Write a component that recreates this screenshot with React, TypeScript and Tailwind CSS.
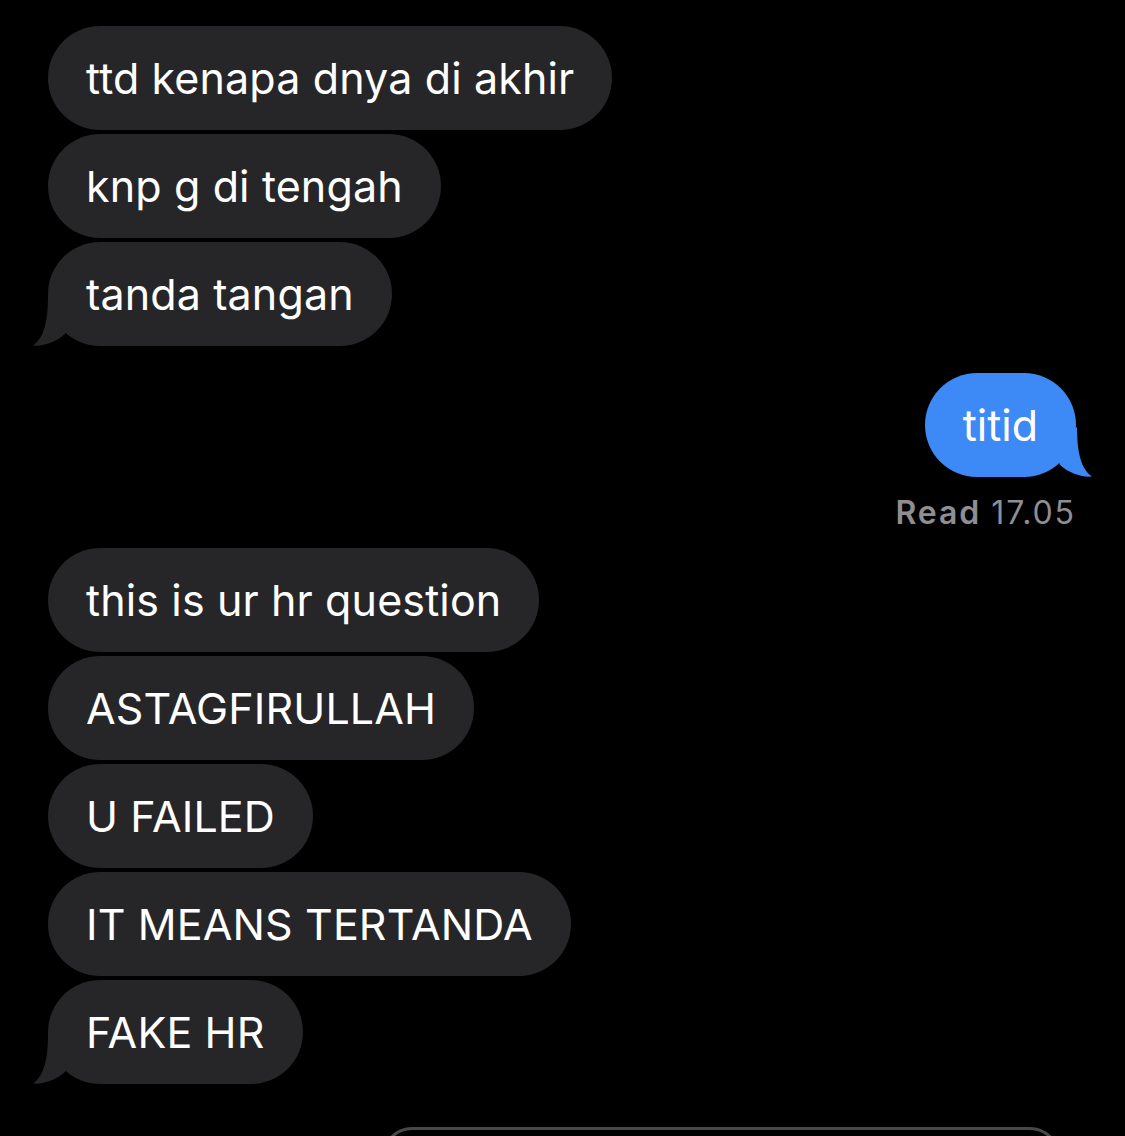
import React from "react";

const GRAY = "#262629";
const BLUE = "#3d89f5";

function LeftTail() {
  return (
    <svg
      className="absolute left-[-16px] bottom-0"
      width="40"
      height="50"
      viewBox="0 0 40 50"
    >
      <path
        d="M16,0 C16,25 12,42 1,49.5 C12,50.5 24,46 33,38 L40,20 Z"
        fill={GRAY}
      />
    </svg>
  );
}

function RightTail() {
  return (
    <svg
      className="absolute right-[-17px] bottom-0"
      width="40"
      height="50"
      viewBox="0 0 40 50"
    >
      <path
        d="M24,0 C24,25 28,42 39,49.5 C28,50.5 16,46 7,38 L0,20 Z"
        fill={BLUE}
      />
    </svg>
  );
}

function Bubble({ text, tail }: { text: string; tail?: boolean }) {
  return (
    <div className="relative rounded-[52px] bg-[#262629] px-[38px] py-[26px] text-[43px] leading-[52px] tracking-[0.003em] text-white">
      {text}
      {tail && <LeftTail />}
    </div>
  );
}

export default function App() {
  const g1 = ["ttd kenapa dnya di akhir", "knp g di tengah", "tanda tangan"];
  const g2 = [
    "this is ur hr question",
    "ASTAGFIRULLAH",
    "U FAILED",
    "IT MEANS TERTANDA",
    "FAKE HR",
  ];
  return (
    <div className="h-[1136px] w-full overflow-hidden bg-black font-['Inter',sans-serif] antialiased">
      <div className="flex flex-col pl-[48px] pr-[49px] pt-[26px]">
        <div className="flex flex-col items-start gap-[4px]">
          {g1.map((t, i) => (
            <Bubble key={t} text={t} tail={i === g1.length - 1} />
          ))}
        </div>
        <div className="mt-[27px] flex justify-end">
          <div className="relative rounded-[52px] bg-[#3d89f5] px-[38px] py-[26px] text-[43px] leading-[52px] text-white">
            titid
            <RightTail />
          </div>
        </div>
        <div className="mt-[16px] flex justify-end text-[32px] leading-[40px] tracking-[0.06em] text-[#8e8e93]">
          <span className="font-semibold">Read</span>
          <span className="ml-[10px]">17.05</span>
        </div>
        <div className="mt-[15px] flex flex-col items-start gap-[4px]">
          {g2.map((t, i) => (
            <Bubble key={t} text={t} tail={i === g2.length - 1} />
          ))}
        </div>
      </div>
      <div className="ml-[382px] mt-[43px] h-[60px] w-[678px] rounded-[40px] border-[3px] border-[#48484a]" />
    </div>
  );
}
